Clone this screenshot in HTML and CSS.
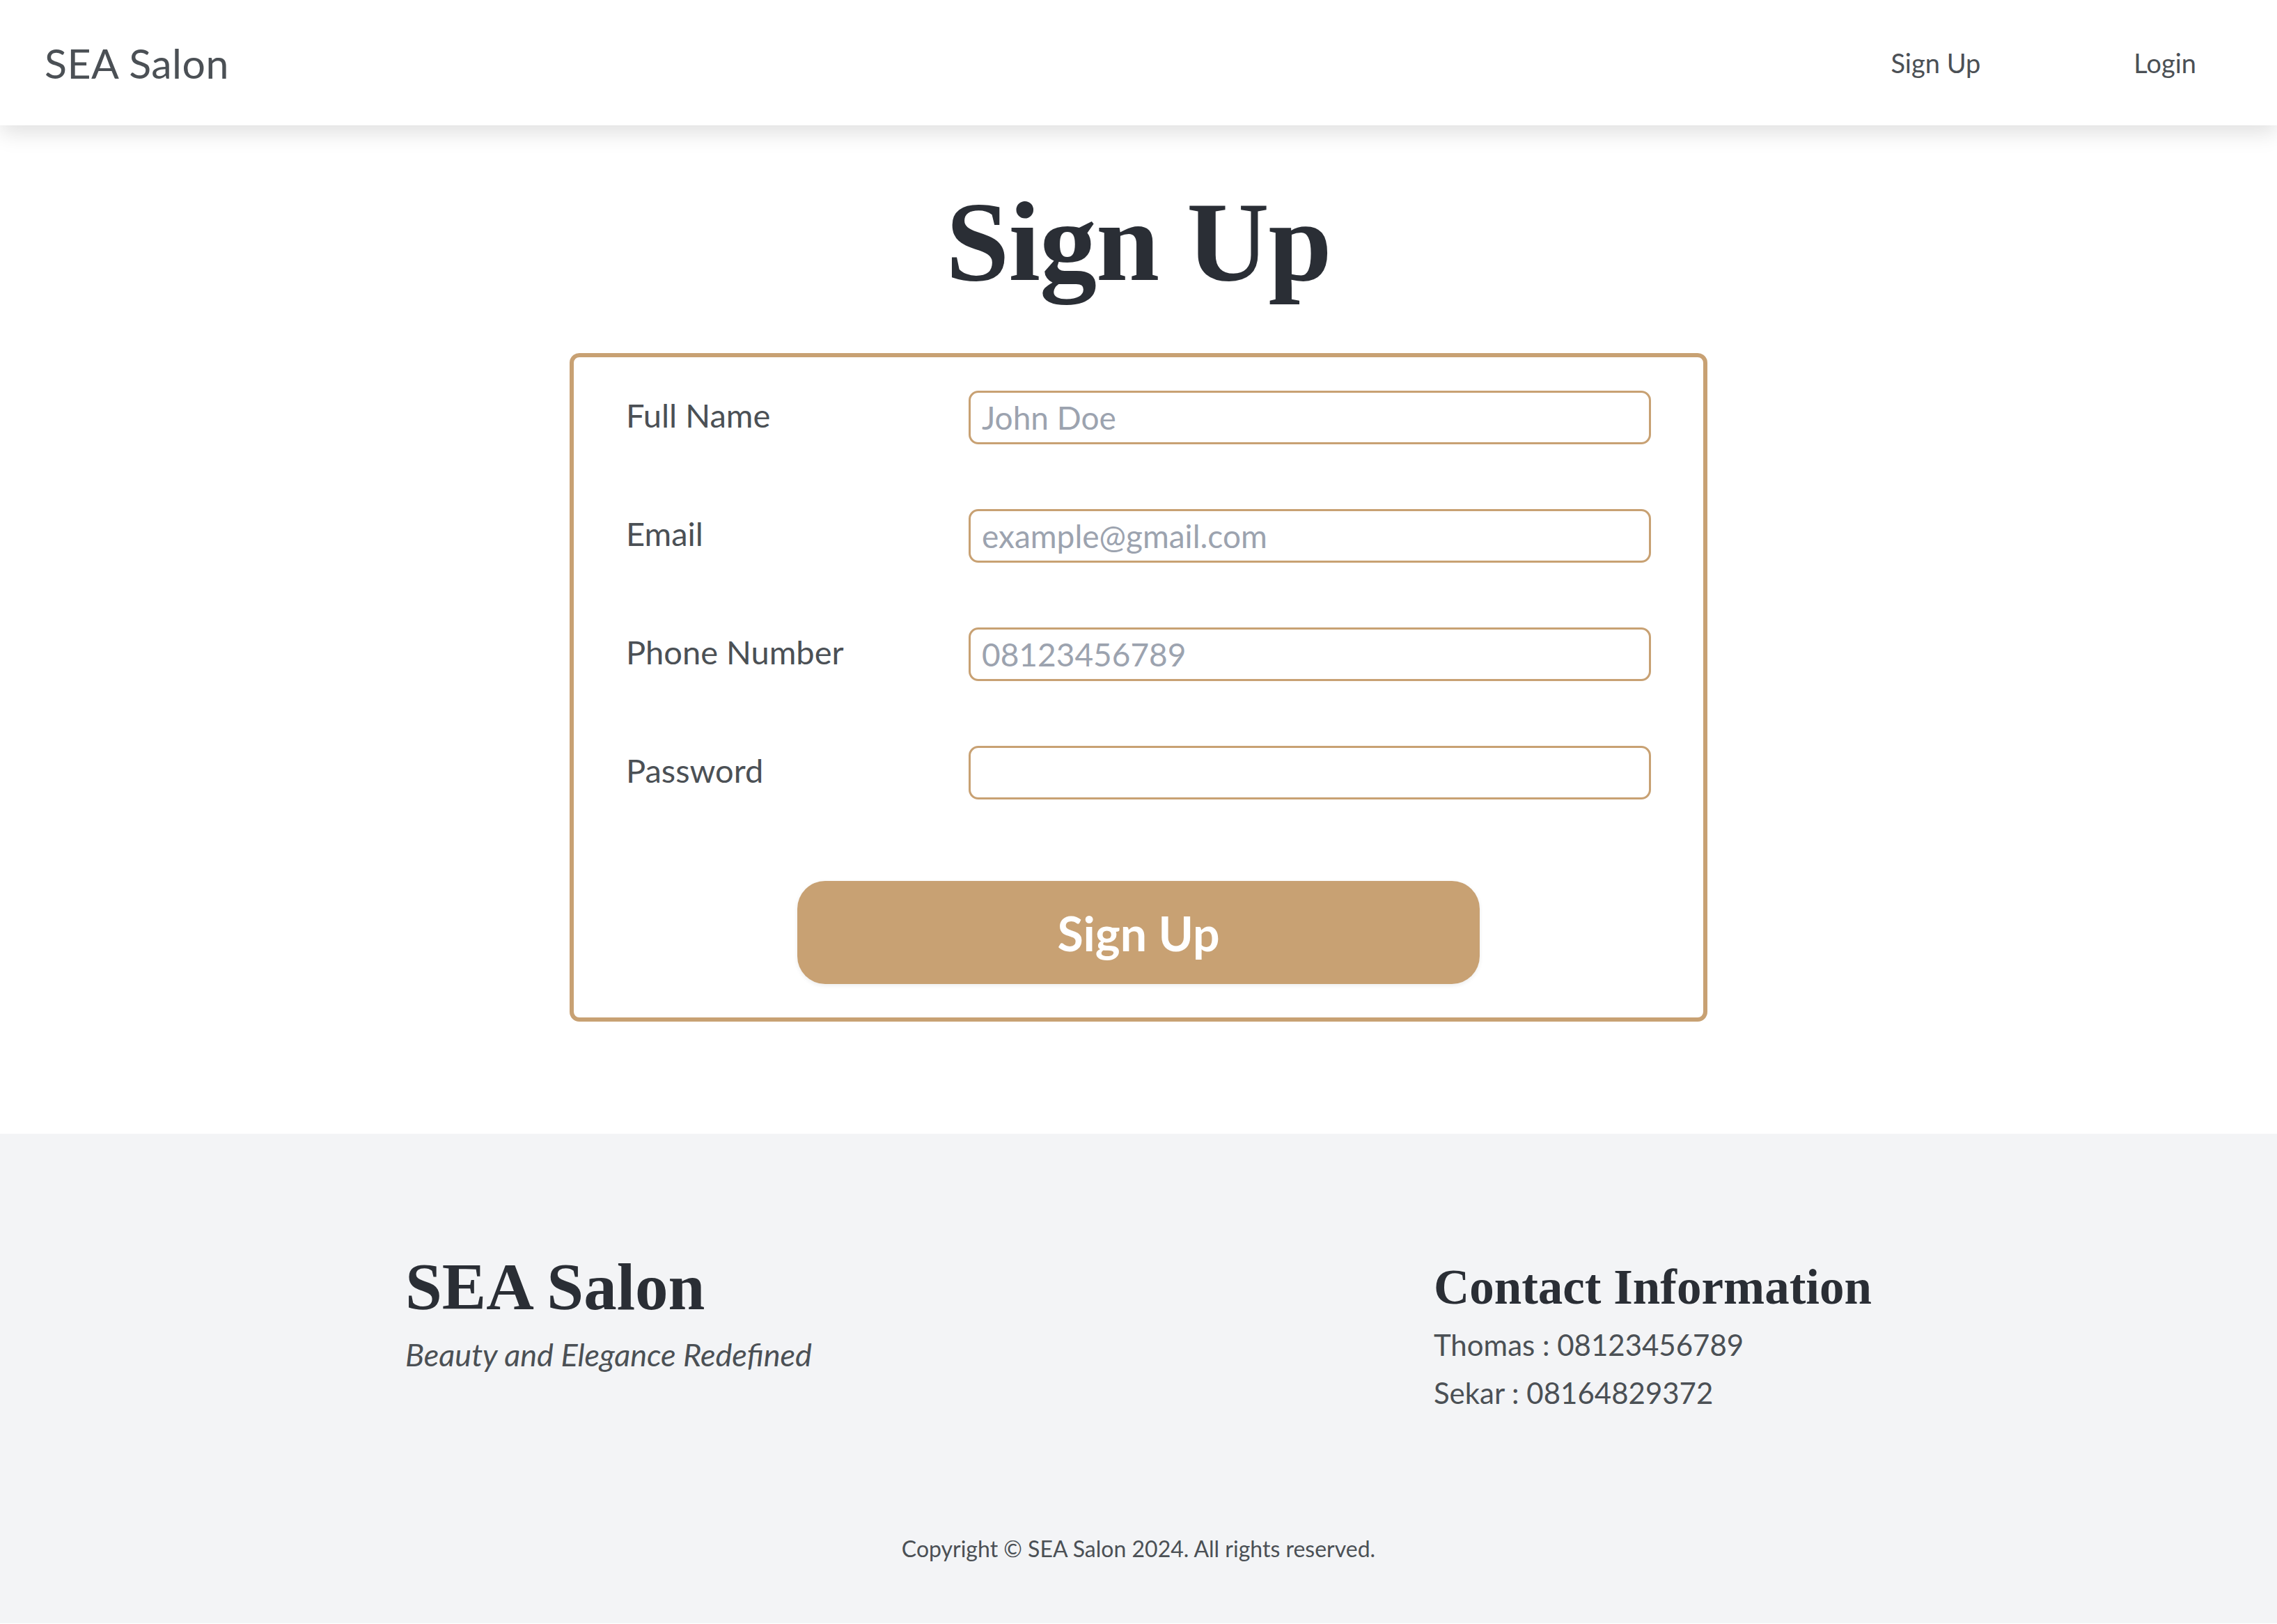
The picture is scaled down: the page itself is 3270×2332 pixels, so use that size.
FILE: index.html
```html
<!DOCTYPE html>
<html lang="en">
<head>
<meta charset="utf-8">
<title>SEA Salon - Sign Up</title>
<link rel="stylesheet" href="styles.css">
</head>
<body>
<header class="navbar">
  <a class="brand" href="#">SEA Salon</a>
  <nav class="nav-links">
    <a href="#" class="nav-link">Sign Up</a>
    <a href="#" class="nav-link">Login</a>
  </nav>
</header>

<main class="main">
  <h1 class="page-title">Sign Up</h1>
  <form class="signup-card">
    <div class="form-grid">
      <label class="field-label" for="name">Full Name</label>
      <input class="field-input" id="name" type="text" placeholder="John Doe">
      <label class="field-label" for="email">Email</label>
      <input class="field-input" id="email" type="email" placeholder="example@gmail.com">
      <label class="field-label" for="phone">Phone Number</label>
      <input class="field-input" id="phone" type="tel" placeholder="08123456789">
      <label class="field-label" for="password">Password</label>
      <input class="field-input" id="password" type="password">
    </div>
    <button type="button" class="submit-btn">Sign Up</button>
  </form>
</main>

<footer class="footer">
  <div class="footer-cols">
    <div class="footer-brand">
      <h2 class="footer-title">SEA Salon</h2>
      <p class="footer-tagline">Beauty and Elegance Redefined</p>
    </div>
    <div class="footer-contact">
      <h3 class="contact-title">Contact Information</h3>
      <p class="contact-line">Thomas : 08123456789</p>
      <p class="contact-line">Sekar : 08164829372</p>
    </div>
  </div>
  <p class="copyright">Copyright © SEA Salon 2024. All rights reserved.</p>
</footer>
</body>
</html>
```

FILE: styles.css
```css
* { box-sizing: border-box; }

body {
  margin: 0;
  background: #ffffff;
  font-family: "Lato", "Open Sans", sans-serif;
  color: #4b5055;
}

.navbar {
  height: 180px;
  display: flex;
  align-items: center;
  justify-content: space-between;
  padding: 0 70px 0 64px;
  background: #ffffff;
  box-shadow: 0 10px 30px rgba(0, 0, 0, 0.13);
  position: relative;
  z-index: 1;
}

.brand {
  font-size: 59px;
  color: #4b5055;
  text-decoration: none;
  letter-spacing: 0.5px;
}

.nav-links {
  display: flex;
  align-items: center;
}

.nav-link {
  font-size: 38px;
  color: #4b5055;
  text-decoration: none;
  padding: 0 46px;
}

.nav-link + .nav-link {
  margin-left: 128px;
}

.main {
  display: flex;
  flex-direction: column;
  align-items: center;
  padding: 70px 0 161px;
}

.page-title {
  margin: 0 0 63px;
  font-family: "Liberation Serif", "Times New Roman", serif;
  font-weight: 700;
  font-size: 164px;
  line-height: 194px;
  color: #2a2e35;
  letter-spacing: -1px;
}

.signup-card {
  width: 1634px;
  border: 6px solid #c8a173;
  border-radius: 14px;
  padding: 48px 75px;
  display: flex;
  flex-direction: column;
  align-items: center;
}

.form-grid {
  width: 100%;
  display: grid;
  grid-template-columns: 492px 980px;
  row-gap: 93px;
  align-items: center;
}

.field-label {
  font-size: 47px;
  color: #4b5055;
  line-height: 1.2;
  margin-top: -6px;
}

.field-input {
  width: 980px;
  height: 77px;
  border: 3px solid #c8a173;
  border-radius: 14px;
  padding: 0 16px;
  font-family: "Lato", "Open Sans", sans-serif;
  font-size: 46px;
  color: #374151;
  background: #ffffff;
  outline: none;
}

.field-input::placeholder {
  color: #9ca3af;
}

.submit-btn {
  margin-top: 117px;
  width: 980px;
  height: 148px;
  border: none;
  border-radius: 40px;
  background: #c8a173;
  color: #ffffff;
  font-family: "Lato", "Open Sans", sans-serif;
  font-weight: 700;
  font-size: 68px;
  box-shadow: 0 2px 6px rgba(0, 0, 0, 0.08);
}

.footer {
  background: #f3f4f6;
  padding: 163px 582px 84px;
}

.footer-cols {
  display: flex;
  justify-content: space-between;
  align-items: flex-start;
}

.footer-title {
  margin: 0;
  font-family: "Liberation Serif", "Times New Roman", serif;
  font-weight: 700;
  font-size: 95px;
  line-height: 1.2;
  color: #2a2e35;
}

.footer-tagline {
  margin: 9px 0 0;
  font-style: italic;
  font-size: 45px;
  line-height: 1.4;
  color: #4b5055;
}

.footer-contact {
  padding-top: 15px;
}

.contact-title {
  margin: 0;
  font-family: "Liberation Serif", "Times New Roman", serif;
  font-weight: 700;
  font-size: 71px;
  line-height: 1.2;
  color: #2a2e35;
}

.contact-line {
  margin: 0;
  font-size: 42px;
  line-height: 69px;
  color: #4b5055;
}

.contact-title + .contact-line {
  margin-top: 6px;
}

.copyright {
  margin: 166px 0 0;
  text-align: center;
  font-size: 32px;
  line-height: 46px;
  color: #4b5055;
}
```
